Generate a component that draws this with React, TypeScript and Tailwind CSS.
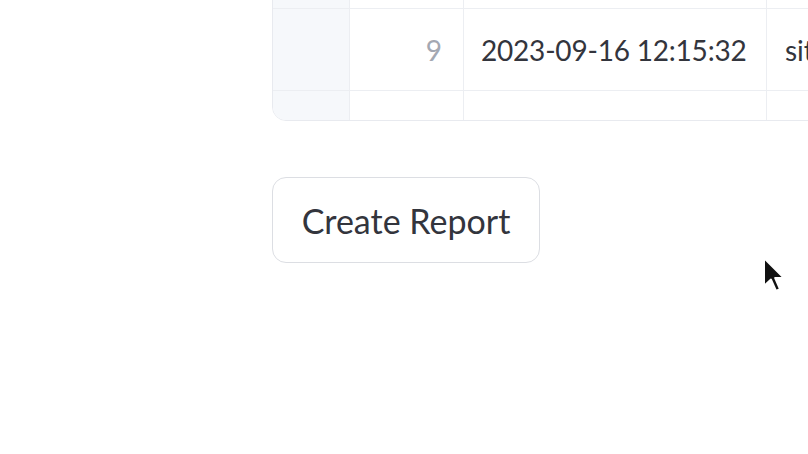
import React from "react";

const font = { fontFamily: "Lato, 'Open Sans', sans-serif" };

function Cursor() {
  return (
    <svg
      className="absolute left-[762px] top-[256px]"
      width="26"
      height="38"
      viewBox="0 0 13 19"
    >
      <path
        d="M1 1 L1 15 L4.5 11.8 L7 17.5 L9 16.6 L6.6 11 L11 11 Z"
        fill="#111"
        stroke="#fff"
        strokeWidth="1"
        strokeLinejoin="round"
      />
    </svg>
  );
}

export default function App() {
  return (
    <div className="relative w-[808px] h-[454px] overflow-hidden bg-white" style={font}>
      <div className="pl-[272px]">
        {/* dataframe, scrolled so only one row is visible */}
        <div className="w-[600px] -mt-[12px] border border-[#e8eaef] rounded-b-[14px] overflow-hidden">
          <div className="grid grid-cols-[77px_114px_303px_1fr]">
            {/* cut-off row above */}
            <div className="h-[20px] bg-[#f6f8fb] border-r border-b border-[#eceef2]" />
            <div className="h-[20px] border-r border-b border-[#eceef2]" />
            <div className="h-[20px] border-r border-b border-[#eceef2]" />
            <div className="h-[20px] border-b border-[#eceef2]" />

            {/* row 9 */}
            <div className="h-[82px] bg-[#f6f8fb] border-r border-b border-[#eceef2]" />
            <div className="h-[82px] border-r border-b border-[#eceef2] flex items-center justify-end pr-[21px] text-[28px] text-[#a4a8b2]">
              9
            </div>
            <div className="h-[82px] border-r border-b border-[#eceef2] flex items-center pl-[17px] text-[28px] text-[#33353d] tracking-[-0.2px]">
              2023-09-16 12:15:32
            </div>
            <div className="h-[82px] border-b border-[#eceef2] flex items-center pl-[18px] text-[28px] text-[#33353d] whitespace-nowrap">
              site_visit
            </div>

            {/* partial next row */}
            <div className="h-[29px] bg-[#f6f8fb] border-r border-[#eceef2]" />
            <div className="h-[29px] border-r border-[#eceef2]" />
            <div className="h-[29px] border-r border-[#eceef2]" />
            <div className="h-[29px]" />
          </div>
        </div>

        <button className="mt-[56px] w-[268px] h-[86px] rounded-[14px] border border-[#dcdee3] bg-white flex items-center justify-center text-[34px] text-[#33353d]">
          Create Report
        </button>
      </div>
      <Cursor />
    </div>
  );
}
